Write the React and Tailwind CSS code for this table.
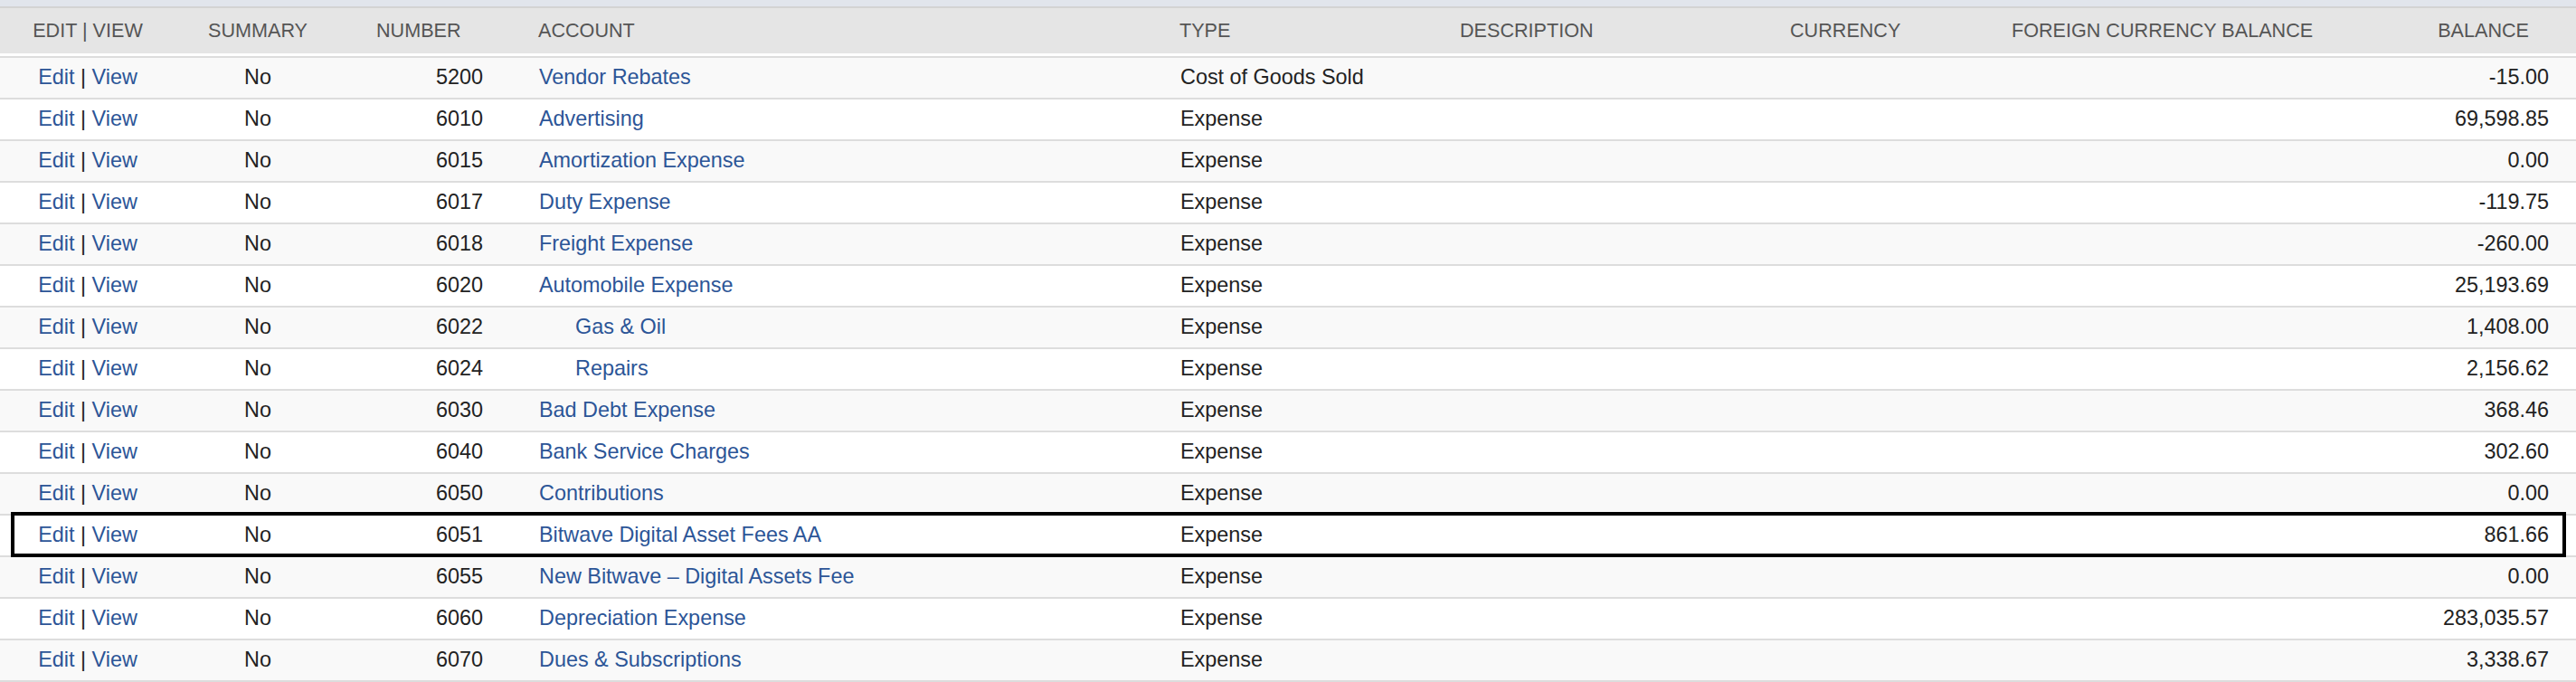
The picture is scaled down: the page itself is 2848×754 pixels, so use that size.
import React from "react";

const rows = [
  ["6010", "Advertising", "Expense", "69,598.85"],
  ["6015", "Amortization Expense", "Expense", "0.00"],
  ["6017", "Duty Expense", "Expense", "-119.75"],
  ["6018", "Freight Expense", "Expense", "-260.00"],
  ["6020", "Automobile Expense", "Expense", "25,193.69"],
  ["6022", "Gas & Oil", "Expense", "1,408.00", true],
  ["6024", "Repairs", "Expense", "2,156.62", true],
  ["6030", "Bad Debt Expense", "Expense", "368.46"],
  ["6040", "Bank Service Charges", "Expense", "302.60"],
  ["6050", "Contributions", "Expense", "0.00"],
  ["6051", "Bitwave Digital Asset Fees AA", "Expense", "861.66", false, true],
  ["6055", "New Bitwave \u2013 Digital Assets Fee", "Expense", "0.00"],
  ["6060", "Depreciation Expense", "Expense", "283,035.57"],
  ["6070", "Dues & Subscriptions", "Expense", "3,338.67"],
];

const allRows = [["5200", "Vendor Rebates", "Cost of Goods Sold", "-15.00"], ...rows];

const grid =
  "grid grid-cols-[194px_182px_168px_750px_300px_366px_240px_400px_1fr]";

export default function App() {
  return (
    <div
      className="w-[2848px] h-[754px] overflow-hidden bg-white"
      style={{ fontFamily: '"Liberation Sans", Arial, sans-serif' }}
    >
      <div className="h-[7px] bg-[#e1e5ec]" />
      <div className="h-[2px] bg-[#d3d3d3]" />
      <div
        className={`${grid} h-[50px] items-center bg-[#e5e5e5] text-[21.6px] text-[#555555] uppercase whitespace-nowrap`}
      >
        <div className="text-center">Edit | View</div>
        <div className="text-center">Summary</div>
        <div className="pl-[40px]">Number</div>
        <div className="pl-[51px]">Account</div>
        <div className="pl-[10px]">Type</div>
        <div className="pl-[20px]">Description</div>
        <div className="pl-[19px]">Currency</div>
        <div className="pl-[24px]">Foreign Currency Balance</div>
        <div className="text-right pr-[52px]">Balance</div>
      </div>
      <div className="h-[3px] bg-white" />
      <div className="border-t-2 border-[#dddddd]">
        {allRows.map(([num, acct, type, bal, sub, hl], i) => (
          <div
            key={num}
            className={`${grid} relative h-[46px] items-center border-b-2 border-[#dddddd] text-[23.4px] text-[#222222] whitespace-nowrap ${
              i % 2 === 0 ? "bg-[#f9f9f9]" : "bg-white"
            }`}
          >
            <div className="text-center">
              <span className="text-[#2c5597]">Edit</span> |{" "}
              <span className="text-[#2c5597]">View</span>
            </div>
            <div className="text-center">No</div>
            <div className="text-right pr-[10px]">{num}</div>
            <div className={`${sub ? "pl-[92px]" : "pl-[52px]"} text-[#2c5597]`}>
              {acct}
            </div>
            <div className="pl-[11px]">{type}</div>
            <div />
            <div />
            <div />
            <div className="text-right pr-[30px]">{bal}</div>
            {hl && (
              <div className="absolute left-[12px] right-[11px] -top-[4px] -bottom-[2px] border-4 border-black pointer-events-none" />
            )}
          </div>
        ))}
      </div>
    </div>
  );
}
